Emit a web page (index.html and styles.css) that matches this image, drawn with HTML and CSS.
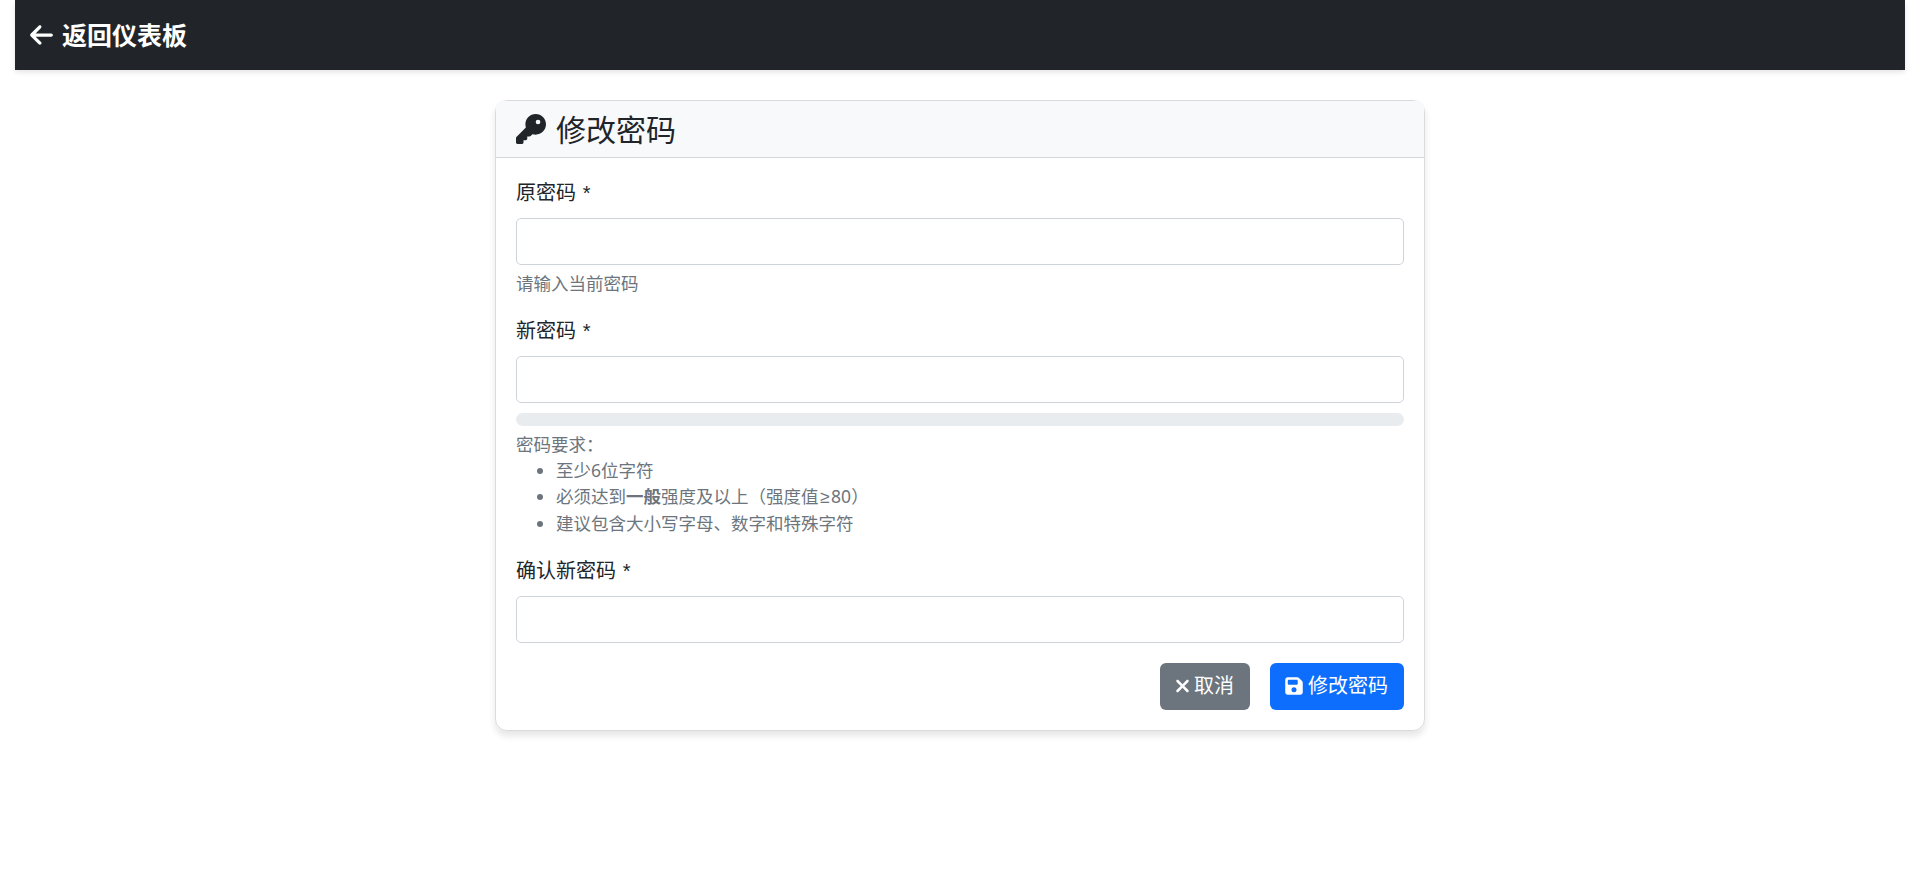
FILE: index.html
```html
<!DOCTYPE html>
<html lang="zh-CN">
<head>
<meta charset="utf-8">
<title>修改密码</title>
<link rel="stylesheet" href="styles.css">
</head>
<body>
<nav class="navbar">
  <a class="brand"><svg class="icon-arrow" viewBox="0 0 448 512"><path d="M9.4 233.4c-12.5 12.5-12.5 32.8 0 45.3l160 160c12.5 12.5 32.8 12.5 45.3 0s12.5-32.8 0-45.3L109.2 288 416 288c17.7 0 32-14.3 32-32s-14.3-32-32-32l-306.7 0L214.6 118.6c12.5-12.5 12.5-32.8 0-45.3s-32.8-12.5-45.3 0l-160 160z"/></svg><span>返回仪表板</span></a>
</nav>
<main class="card">
  <header class="card-header">
    <svg class="icon-key" viewBox="0 0 512 512"><path d="M336 352c97.2 0 176-78.8 176-176S433.2 0 336 0S160 78.8 160 176c0 18.7 2.9 36.8 8.3 53.7L7 391c-4.5 4.5-7 10.6-7 17v80c0 13.3 10.7 24 24 24h80c13.3 0 24-10.7 24-24V448h40c13.3 0 24-10.7 24-24V384h40c6.4 0 12.5-2.5 17-7l33.3-33.3c16.9 5.4 35 8.3 53.7 8.3zM376 96a40 40 0 1 1 0 80 40 40 0 1 1 0-80z"/></svg>
    <h3 class="title">修改密码</h3>
  </header>
  <form class="card-body">
    <div class="field">
      <label class="label" for="old">原密码 <span class="mark">*</span></label>
      <input class="input" id="old" type="password">
      <div class="help">请输入当前密码</div>
    </div>
    <div class="field">
      <label class="label" for="new">新密码 <span class="mark">*</span></label>
      <input class="input" id="new" type="password">
      <div class="progress"></div>
      <div class="help">密码要求：
        <ul class="rules">
          <li>至少6位字符</li>
          <li>必须达到<strong>一般</strong>强度及以上（强度值<span class="sign">≥</span>80）</li>
          <li>建议包含大小写字母、数字和特殊字符</li>
        </ul>
      </div>
    </div>
    <div class="field">
      <label class="label" for="confirm">确认新密码 <span class="mark">*</span></label>
      <input class="input" id="confirm" type="password">
    </div>
    <div class="actions">
      <button class="btn btn-cancel" type="button"><svg class="icon-x" viewBox="0 0 384 512"><path d="M342.6 150.6c12.5-12.5 12.5-32.8 0-45.3s-32.8-12.5-45.3 0L192 210.7 86.6 105.4c-12.5-12.5-32.8-12.5-45.3 0s-12.5 32.8 0 45.3L146.7 256 41.4 361.4c-12.5 12.5-12.5 32.8 0 45.3s32.8 12.5 45.3 0L192 301.3 297.4 406.6c12.5 12.5 32.8 12.5 45.3 0s12.5-32.8 0-45.3L237.3 256 342.6 150.6z"/></svg><span>取消</span></button>
      <button class="btn btn-save" type="button"><svg class="icon-save" viewBox="0 0 448 512"><path d="M64 32C28.7 32 0 60.7 0 96V416c0 35.3 28.7 64 64 64H384c35.3 0 64-28.7 64-64V173.3c0-17-6.7-33.3-18.7-45.3L352 50.7C340 38.7 323.7 32 306.7 32H64zm0 96c0-17.7 14.3-32 32-32H288c17.7 0 32 14.3 32 32v64c0 17.7-14.3 32-32 32H96c-17.7 0-32-14.3-32-32V128zM224 288a64 64 0 1 1 0 128 64 64 0 1 1 0-128z"/></svg><span>修改密码</span></button>
    </div>
  </form>
</main>
</body>
</html>
```
FILE: styles.css
```css
* { box-sizing: border-box; }
body {
  margin: 0;
  padding: 0 15px;
  min-height: 100vh;
  background: #fff;
  color: #212529;
  font: 20px/30px "Noto Sans", "Noto Sans CJK SC", sans-serif;
}
svg { fill: currentColor; flex: none; display: block; }
.navbar {
  height: 70px;
  padding: 0 14.5px;
  display: flex;
  align-items: center;
  background: #212529;
  box-shadow: 0 2.5px 5px rgba(0, 0, 0, .1);
}
.brand { display: flex; align-items: center; gap: 9.5px; color: #fff; font-size: 25px; font-weight: 700; }
.icon-arrow { width: 23px; height: 26px; margin-bottom: 1px; }
.card {
  width: 930px;
  margin: 30px auto 0;
  border: 1px solid rgba(0, 0, 0, .14);
  border-radius: 12px;
  box-shadow: 0 5px 7.5px rgba(0, 0, 0, .1);
}
.card-header {
  display: flex;
  align-items: center;
  gap: 10px;
  height: 57px;
  padding: 0 20px;
  background: #f8f9fb;
  border-bottom: 1px solid #d5d8dc;
  border-radius: 6px 6px 0 0;
}
.icon-key { width: 30px; height: 30px; }
.title { margin: 0; padding-top: 1px; font-size: 30px; line-height: 36px; font-weight: 400; }
.card-body { padding: 20px; }
.field { margin-bottom: 20px; }
.label { display: block; margin-bottom: 10px; }
.mark { margin-left: 1.5px; font-family: "Liberation Sans", sans-serif; line-height: 1; }
.sign { font-family: "Liberation Sans", sans-serif; line-height: 1; padding: 0 1.5px; }
.input {
  display: block;
  width: 100%;
  height: 47px;
  padding: 7px 15px;
  border: 1px solid #ced4da;
  border-radius: 5px;
  background: #fff;
}
.help { margin-top: 5px; color: #6c757d; font-size: 17.5px; line-height: 26.25px; }
.progress { height: 12.5px; margin-top: 10px; border-radius: 6.5px; background: #e9ecef; }
.rules { margin: 0; padding-left: 40px; }
.rules strong { font-weight: 700; }
.actions { display: flex; justify-content: flex-end; gap: 20px; }
.btn {
  display: flex;
  align-items: center;
  height: 47px;
  padding: 0 14px;
  border: 1px solid transparent;
  border-radius: 6px;
  color: #fff;
  font: inherit;
}
.btn-cancel { width: 90px; gap: 4px; background: #6c757d; }
.btn-save { width: 134px; gap: 5px; background: #0d6efd; }
.icon-x { width: 15px; height: 20px; }
.icon-save { width: 18px; height: 20px; }
```
